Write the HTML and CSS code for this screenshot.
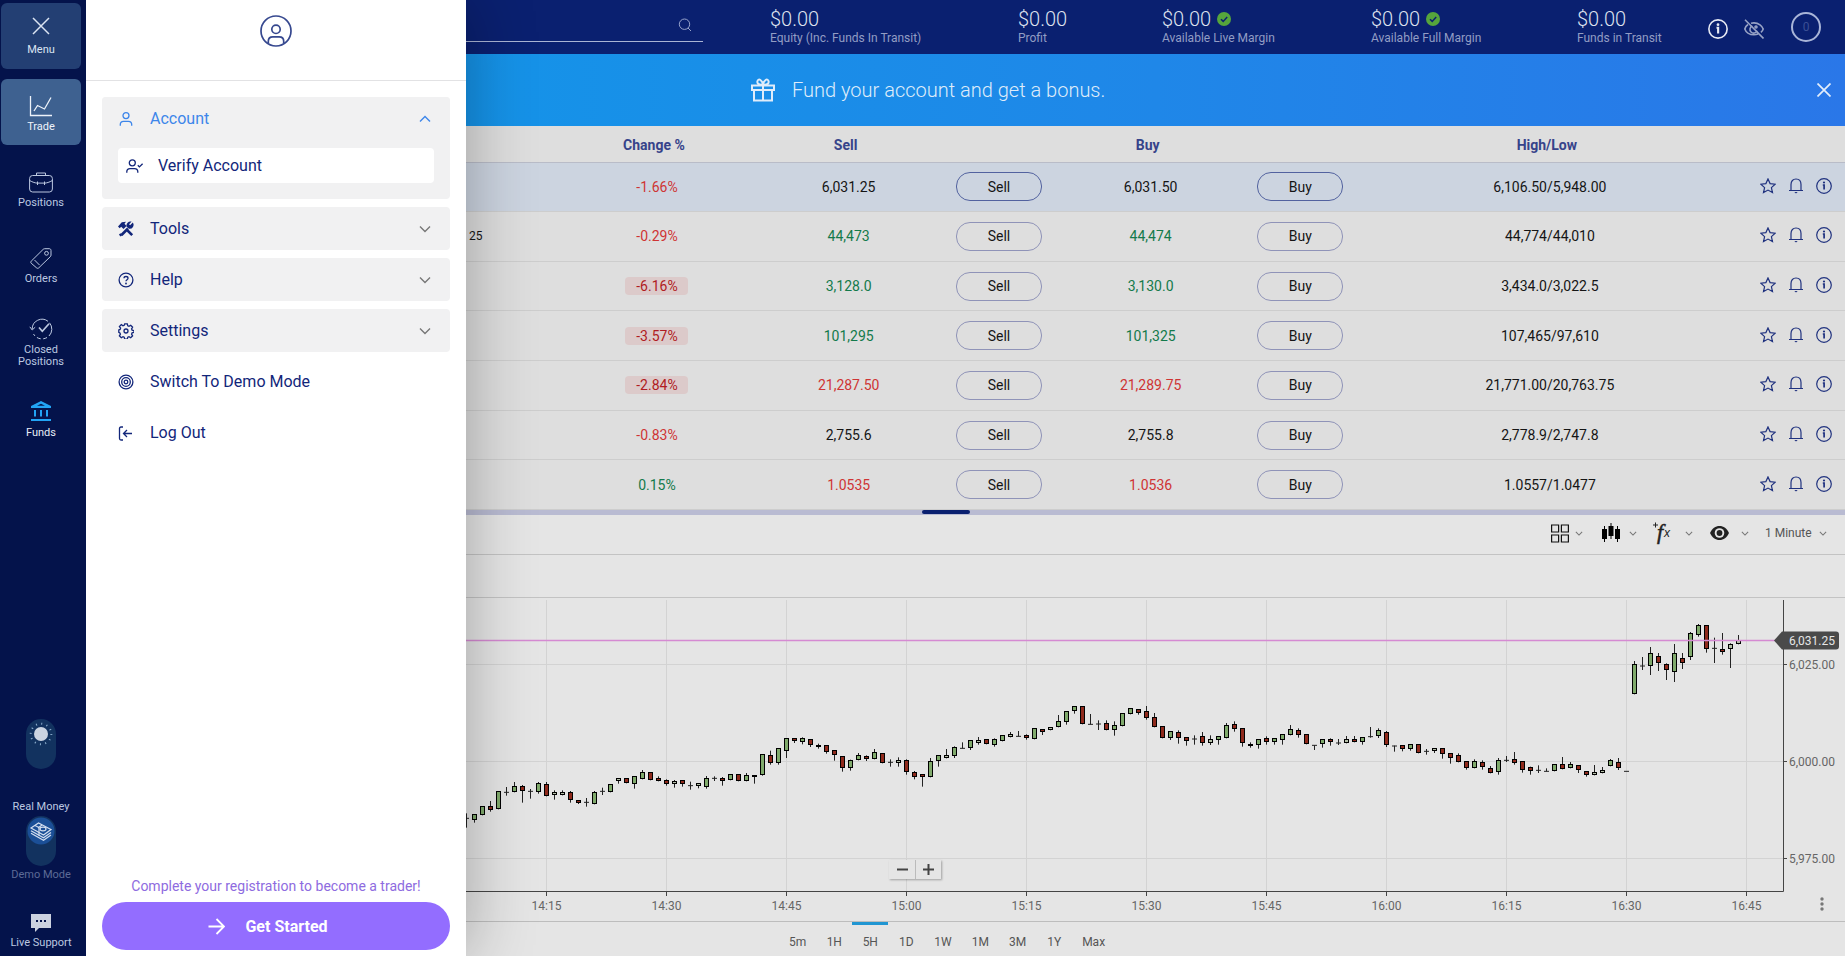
FILE: index.html
```html
<!DOCTYPE html>
<html lang="en">
<head>
<meta charset="utf-8">
<title>Trade</title>
<link rel="stylesheet" href="styles.css">
</head>
<body>
<svg class="symbols" aria-hidden="true">
  <symbol id="star" viewBox="0 0 16 16"><path d="M8 .9l2.100 4.700 5.100.6-3.800 3.400 1.100 5L8 12.100l-4.500 2.500 1.100-5L.8 6.200l5.100-.6z"/></symbol>
  <symbol id="bell" viewBox="0 0 16 16"><path d="M1 12.500h14M3 12.300V6.500c0-3.300 2-5.500 5-5.500s5 2.200 5 5.500v5.800"/><path d="M6.300 14h3.400L8 15.600z" fill="currentColor" stroke="none"/></symbol>
  <symbol id="info" viewBox="0 0 16 16"><circle cx="8" cy="8" r="7.300"/><path d="M6.800 7h1.300v4.600" stroke-width="1.700"/><circle cx="8" cy="4.500" r="1.100" fill="currentColor" stroke="none"/></symbol>
  <symbol id="down" viewBox="0 0 12 8"><path d="M1 1.500l5 5 5-5"/></symbol>
  <symbol id="up" viewBox="0 0 12 8"><path d="M1 6.500l5-5 5 5"/></symbol>
  <symbol id="tick" viewBox="0 0 14 14"><circle cx="7" cy="7" r="7" fill="#56a53c" stroke="none"/><path d="M4 7.200l2.200 2.200 4-4.400" stroke="#0a2070" stroke-width="1.500"/></symbol>
</svg>

<div class="app">
  <nav class="rail">
    <button class="rail-item menu" type="button">
      <svg class="icon" width="18" height="18" viewBox="0 0 18 18"><path d="M1 1l16 16M17 1L1 17" stroke-width="1.500"/></svg>
      <span>Menu</span>
    </button>
    <a class="rail-item trade" href="#trade">
      <svg class="icon" width="24" height="21" viewBox="0 0 24 21"><path d="M1.500 0v19.500H23M5 15l3.500-5.500 7 3.500L22 1.500" stroke-width="1.300"/></svg>
      <span>Trade</span>
    </a>
    <a class="rail-item" href="#positions">
      <svg class="icon" width="24" height="21" viewBox="0 0 24 21"><rect x=".6" y="3.500" width="22.800" height="16.500" rx="3"/><path d="M7.500 3.500V1h9v2.500M.6 8.500c3 1.800 6 2.500 7.400 2.600h8c1.400-.1 4.400-.8 7.400-2.600M8.500 9.500V13M15.500 9.500V13"/></svg>
      <span>Positions</span>
    </a>
    <a class="rail-item" href="#orders">
      <svg class="icon" width="22" height="21" viewBox="0 0 22 21"><path d="M1.200 13.200L13 1.500c.5-.5 1-.8 1.700-.8h4.600c1 0 1.700.7 1.700 1.700v4.700c0 .7-.3 1.200-.8 1.700L8.800 19.800c-.7.700-1.600.7-2.300 0L1.200 15.200c-.6-.6-.6-1.400 0-2zM4.500 12l5 5"/><circle cx="16.500" cy="5.300" r="1.900"/></svg>
      <span>Orders</span>
    </a>
    <a class="rail-item" href="#closed">
      <svg class="icon" width="24" height="22" viewBox="0 0 24 22"><path d="M3.200 11A9.800 9.800 0 0 1 19 3.300M20.500 4.800A9.800 9.800 0 0 1 20 18" /><path d="M18 19.500A9.800 9.800 0 0 1 4.500 16" stroke-dasharray="4 2.500"/><path d="M.8 8.800L3.200 12l3-2.800"/><path d="M10 9.500l3.300 3.800 6.700-7.500" stroke-width="1.700"/></svg>
      <span>Closed<br>Positions</span>
    </a>
    <a class="rail-item funds" href="#funds">
      <svg class="icon" width="20" height="20" viewBox="0 0 20 20"><path d="M10 0l10 5v2H0V5zM3 9h2v6.500H3zM9 9h2v6.500H9zM15 9h2v6.500h-2zM0 18h20v2H0z" fill="currentColor" stroke="none"/><path d="M10 2.700l4 2H6z" fill="#04134b" stroke="none"/></svg>
      <span>Funds</span>
    </a>
    <div class="rail-foot">
      <label class="switch">
        <input type="checkbox" aria-label="Light theme" checked>
        <svg class="knob" width="28" height="28" viewBox="0 0 28 28"><circle cx="14" cy="14" r="7" fill="#ccd5e2"/><circle cx="14" cy="14" r="10.300" fill="none" stroke="#8fb0cf" stroke-width="2" stroke-dasharray="1 4.390"/></svg>
      </label>
      <label class="money">
        <span>Real Money</span>
        <span class="switch">
          <input type="checkbox" aria-label="Real money or demo mode" checked>
          <svg class="knob" width="28" height="28" viewBox="0 0 28 28"><circle cx="14" cy="14" r="13.500" fill="#1b4f97"/><g fill="none" stroke="#d3def0" stroke-width="1.200"><path d="M4 11l7.500-5L24 12.500 16.500 18zM4 13.700l12.500 7L24 15.400M4 16.300l12.500 7L24 18"/><path d="M8 8.500l4 2v8.200M15 8l-4 3"/><ellipse cx="16" cy="12" rx="3" ry="1.800"/></g></svg>
        </span>
        <span class="dim">Demo Mode</span>
      </label>
      <button class="support" type="button">
        <svg width="20" height="18" viewBox="0 0 20 18"><path d="M0 0h20v14H8l-4 4v-4H0z" fill="#ccd2e0"/><path d="M5 6h2v2H5zM9 6h2v2H9zM13 6h2v2h-2z" fill="#04134b"/></svg>
        <span>Live Support</span>
      </button>
    </div>
  </nav>

  <aside class="drawer">
    <header class="drawer-head">
      <svg class="icon" width="32" height="32" viewBox="0 0 32 32" stroke-width="1.700"><circle cx="16" cy="16" r="15"/><circle cx="16" cy="14.300" r="4.200"/><path d="M8.300 28v-1.800c0-2.800 2-4.400 4.500-4.400h6.400c2.500 0 4.500 1.600 4.500 4.400V28"/></svg>
    </header>
    <div class="menu-list">
      <section class="group">
        <button class="menu-item open" type="button">
          <svg class="icon" width="16" height="16" viewBox="0 0 16 16" stroke-width="1.300"><circle cx="8" cy="4.600" r="3"/><path d="M2.300 14.800v-1.300c0-2 1.300-3.200 3.200-3.200h5c1.900 0 3.200 1.200 3.200 3.200v1.300"/></svg>
          <span>Account</span>
          <svg class="icon chev" width="12" height="8"><use href="#up"/></svg>
        </button>
        <a class="sub-item" href="#verify">
          <svg class="icon" width="18" height="16" viewBox="0 0 18 16" stroke-width="1.300"><circle cx="6.300" cy="4.800" r="3"/><path d="M.8 14.800v-1c0-2 1.300-3.200 3.200-3.200h4.600c1.900 0 3.200 1.200 3.200 3.200v1M11.800 7.300l1.600 1.600 3.200-3.200"/></svg>
          <span>Verify Account</span>
        </a>
      </section>
      <button class="menu-item" type="button">
        <svg class="icon" width="16" height="16" viewBox="0 0 16 16"><path d="M3.500 14L10 7.500M14.200 14.200L8.500 8.500" stroke-width="2.600"/><path d="M0 5.500L3.800 1.200 8 .8 6.500 2.800l2 2.200-3 3-2.300-2.300-1.500 1.600zM14.800 1.500l-2.700 2.700-1-1L13.600.6A4 4 0 0 0 8.700 5.700L11 7.800A4 4 0 0 0 14.800 1.500zM2.300 12.300l2 2-1.600 1.200-1.800-1.700z" fill="currentColor" stroke="none"/></svg>
        <span>Tools</span>
        <svg class="icon chev" width="12" height="8"><use href="#down"/></svg>
      </button>
      <button class="menu-item" type="button">
        <svg class="icon" width="16" height="16" viewBox="0 0 16 16" stroke-width="1.300"><circle cx="8" cy="8" r="6.900"/><path d="M6 6.300C6 5.200 6.900 4.500 8 4.500s2 .7 2 1.700c0 1.500-2 1.500-2 3.100"/><circle cx="8" cy="11.500" r=".9" fill="currentColor" stroke="none"/></svg>
        <span>Help</span>
        <svg class="icon chev" width="12" height="8"><use href="#down"/></svg>
      </button>
      <button class="menu-item" type="button">
        <svg class="icon" width="16" height="16" viewBox="0 0 16 16" stroke-width="1.300"><path d="M6.700.9h2.600l.5 1.900 1.200.5 1.700-1 1.900 1.900-1 1.700.5 1.200 1.900.5v1.800l-1.900.5-.5 1.200 1 1.700-1.900 1.900-1.700-1-1.200.5-.5 1.900H6.700l-.5-1.900-1.200-.5-1.700 1-1.900-1.900 1-1.700-.5-1.200L.8 9.300V6.900l1.300-.5.5-1.200-1.200-1.700 1.900-1.900 1.700 1.200 1.200-.5z"/><circle cx="8" cy="8" r="2"/></svg>
        <span>Settings</span>
        <svg class="icon chev" width="12" height="8"><use href="#down"/></svg>
      </button>
      <button class="menu-item plain" type="button">
        <svg class="icon" width="16" height="16" viewBox="0 0 16 16" stroke-width="1.300"><circle cx="8" cy="8" r="6.900"/><circle cx="8" cy="8" r="4.300"/><circle cx="8" cy="8" r="1.800"/></svg>
        <span>Switch To Demo Mode</span>
      </button>
      <button class="menu-item plain" type="button">
        <svg class="icon" width="16" height="16" viewBox="0 0 16 16" stroke-width="1.300"><path d="M5 2H3c-1 0-1.500.5-1.500 1.500v10c0 1 .5 1.500 1.500 1.500h2M14 8.500H5.500M9 5L5.500 8.500 9 12"/></svg>
        <span>Log Out</span>
      </button>
    </div>
    <footer class="drawer-foot">
      <p>Complete your registration to become a trader!</p>
      <button class="cta" type="button">
        <svg class="icon" width="17" height="17" viewBox="0 0 17 17" stroke-width="1.800"><path d="M.5 8.500h15M8.500 1l7.500 7.500L8.500 16"/></svg>
        <span>Get Started</span>
      </button>
    </footer>
  </aside>

  <main class="main">
    <header class="topbar">
      <label class="search">
        <input type="search" aria-label="Search">
        <svg class="icon" width="14" height="14" viewBox="0 0 14 14"><circle cx="6.500" cy="6.200" r="5.200"/><path d="M10 10l3 3"/></svg>
      </label>
      <div class="metric"><b>$0.00</b><span>Equity (Inc. Funds In Transit)</span></div>
      <div class="metric"><b>$0.00</b><span>Profit</span></div>
      <div class="metric"><b>$0.00 <svg class="icon" width="14" height="14"><use href="#tick"/></svg></b><span>Available Live Margin</span></div>
      <div class="metric"><b>$0.00 <svg class="icon" width="14" height="14"><use href="#tick"/></svg></b><span>Available Full Margin</span></div>
      <div class="metric"><b>$0.00</b><span>Funds in Transit</span></div>
      <div class="top-actions">
        <button type="button" aria-label="Information"><svg class="icon" width="20" height="20" stroke-width="1.300"><use href="#info"/></svg></button>
        <button type="button" aria-label="Hide balances" class="muted"><svg class="icon" width="20" height="20" viewBox="0 0 20 20" stroke-width="1.600"><path d="M4 5.500C2.300 6.700 1.200 8.300.8 10c1 3 4.500 5.800 9.200 5.800 1.500 0 2.800-.2 4-.7M7 4.300c.9-.3 2-.4 3-.4 4.700 0 8.200 3 9.200 6.100-.4 1.300-1.200 2.500-2.300 3.400M1 .8l18.500 18.700"/><path d="M8.300 7a3.700 3.700 0 1 0 4.800 4.800"/><circle cx="12" cy="8" r="1"/></svg></button>
        <span class="counter">0</span>
      </div>
    </header>

    <section class="banner">
      <svg class="icon" width="24" height="24" viewBox="0 0 24 24" stroke-width="2"><path d="M1 7.500h22v4.500H1zM3 12h18v10.500H3zM12 7.500v15M12 7C9 7 5.500 6 6.500 3s5-1 5.500 4c.5-5 4.500-7 5.500-4S15 7 12 7z"/></svg>
      <span>Fund your account and get a bonus.</span>
      <button type="button" aria-label="Close"><svg class="icon" width="14" height="14" viewBox="0 0 14 14" stroke-width="1.700"><path d="M.5.5l13 13M13.500.5l-13 13"/></svg></button>
    </section>

    <table class="quotes">
      <colgroup><col class="c-name"><col class="c-change"><col class="c-price"><col class="c-sell"><col class="c-buyprice"><col class="c-buy"><col class="c-range"><col class="c-act"></colgroup>
      <thead><tr><th></th><th>Change %</th><th>Sell</th><th></th><th>Buy</th><th></th><th>High/Low</th><th></th></tr></thead>
      <tbody>
        <tr class="selected"><td></td><td class="neg">-1.66%</td><td>6,031.25</td><td><button type="button">Sell</button></td><td>6,031.50</td><td><button type="button">Buy</button></td><td>6,106.50/5,948.00</td><td class="acts"></td></tr>
        <tr><td class="name">25</td><td class="neg">-0.29%</td><td class="pos">44,473</td><td><button type="button">Sell</button></td><td class="pos">44,474</td><td><button type="button">Buy</button></td><td>44,774/44,010</td><td class="acts"></td></tr>
        <tr><td></td><td><mark>-6.16%</mark></td><td class="pos">3,128.0</td><td><button type="button">Sell</button></td><td class="pos">3,130.0</td><td><button type="button">Buy</button></td><td>3,434.0/3,022.5</td><td class="acts"></td></tr>
        <tr><td></td><td><mark>-3.57%</mark></td><td class="pos">101,295</td><td><button type="button">Sell</button></td><td class="pos">101,325</td><td><button type="button">Buy</button></td><td>107,465/97,610</td><td class="acts"></td></tr>
        <tr><td></td><td><mark>-2.84%</mark></td><td class="neg">21,287.50</td><td><button type="button">Sell</button></td><td class="neg">21,289.75</td><td><button type="button">Buy</button></td><td>21,771.00/20,763.75</td><td class="acts"></td></tr>
        <tr><td></td><td class="neg">-0.83%</td><td>2,755.6</td><td><button type="button">Sell</button></td><td>2,755.8</td><td><button type="button">Buy</button></td><td>2,778.9/2,747.8</td><td class="acts"></td></tr>
        <tr><td></td><td class="pos">0.15%</td><td class="neg">1.0535</td><td><button type="button">Sell</button></td><td class="neg">1.0536</td><td><button type="button">Buy</button></td><td>1.0557/1.0477</td><td class="acts"></td></tr>
      </tbody>
    </table>

    <div class="splitter"><span></span></div>

    <div class="toolbar">
      <button type="button" aria-label="Layout">
        <svg width="18" height="19" viewBox="0 0 18 19" fill="none" stroke="#111" stroke-width="1.200"><path d="M.6 1h7v7h-7zM10.400 1h7v7h-7zM.6 11h7v7h-7zM10.400 11h7v7h-7z"/></svg>
        <svg class="icon small" width="8" height="5"><use href="#down"/></svg>
      </button>
      <button type="button" aria-label="Chart type">
        <svg width="24" height="20" viewBox="0 0 24 20" fill="#000"><path d="M3 6h5v10H3zM9.500 3h5v10h-5zM16 6h5v10h-5zM5 3h1v16H5zM11.500 0h1v16h-1zM18 3h1v16h-1z"/></svg>
        <svg class="icon small" width="8" height="5"><use href="#down"/></svg>
      </button>
      <button type="button" aria-label="Indicators">
        <svg width="26" height="28" viewBox="0 0 26 28"><path d="M0 6h5M2.500 3.500v5" stroke="#222" fill="none"/><text class="fx" x="4" y="20">f</text><text class="fx-x" x="11" y="18">x</text></svg>
        <svg class="icon small" width="8" height="5"><use href="#down"/></svg>
      </button>
      <button type="button" aria-label="Visibility">
        <svg width="26" height="14" viewBox="0 0 26 14"><path d="M1 7C3 2.500 6.500 0 10.500 0S18 2.500 20 7c-2 4.500-5.500 7-9.500 7S3 11.500 1 7z" fill="#222"/><circle cx="10.500" cy="7" r="4.800" fill="#e5e5e5"/><circle cx="10.500" cy="7" r="2.900" fill="#222"/></svg>
        <svg class="icon small" width="8" height="5"><use href="#down"/></svg>
      </button>
      <label class="interval">
        <select aria-label="Interval"><option>1 Minute</option></select>
        <svg class="icon small" width="8" height="5"><use href="#down"/></svg>
      </label>
    </div>
    <div class="strip"></div>

    <section class="chart">
      <svg id="plot" class="plot" role="img" aria-label="Price chart"></svg>
      <div class="zoom"><button type="button" aria-label="Zoom out"><svg width="11" height="11"><path d="M0 5.500h11" stroke="#444" stroke-width="2"/></svg></button><button type="button" aria-label="Zoom in"><svg width="11" height="11"><path d="M0 5.500h11M5.500 0v11" stroke="#444" stroke-width="2"/></svg></button></div>
    </section>

    <div class="ranges">
      <button type="button">5m</button><button type="button">1H</button><button type="button" class="on">5H</button><button type="button">1D</button><button type="button">1W</button><button type="button">1M</button><button type="button">3M</button><button type="button">1Y</button><button type="button">Max</button>
    </div>
  </main>
</div>
<script src="chart.js"></script>
</body>
</html>
```

FILE: styles.css
```css
* { box-sizing: border-box; }
body { margin: 0; font-family: Roboto, "Liberation Sans", sans-serif; font-size: 14px; color: #151515; }
button, input, select { font: inherit; color: inherit; background: none; border: 0; padding: 0; margin: 0; }
a { color: inherit; text-decoration: none; }
svg { display: block; flex: none; }
.symbols { position: absolute; width: 0; height: 0; }
.icon { fill: none; stroke: currentColor; }
.app { display: grid; grid-template-columns: 86px 380px minmax(0, 1fr); min-height: 100vh; }

/* left rail */
.rail { display: flex; flex-direction: column; gap: 10px; padding: 3px 5px 6px 1px; background: #04134b; color: #bcc8e0; font-size: 11px; line-height: 12px; text-align: center; }
.rail-item { display: flex; flex-direction: column; align-items: center; justify-content: center; gap: 4px; height: 66px; padding-top: 5px; border-radius: 6px; }
.rail .menu { background: #233f73; color: #dbe4f2; gap: 9px; padding-top: 0; }
.rail .trade { background: #3e6190; color: #eef3fa; }
.rail .funds { color: #22a4f5; gap: 6px; padding-top: 7px; }
.rail .funds span { color: #e8edf6; }
.rail-foot { display: flex; flex-direction: column; align-items: center; margin-top: auto; }
.switch { position: relative; display: block; width: 30px; height: 50px; }
.switch input { display: block; appearance: none; width: 30px; height: 50px; border-radius: 15px; background: #12325f; }
.knob { position: absolute; left: 1px; top: 1px; }
.money { display: flex; flex-direction: column; align-items: center; gap: 3px; margin-top: 32px; }
.dim { color: #5d6b96; }
.support { display: flex; flex-direction: column; align-items: center; gap: 4px; margin-top: 33px; line-height: 14px; }

/* drawer */
.drawer { position: relative; z-index: 1; display: flex; flex-direction: column; background: #fff; color: #12267a; box-shadow: 0 0 64px rgba(0, 0, 0, .3); clip-path: inset(0 -80px 0 0); }
.drawer-head { display: flex; justify-content: center; height: 81px; padding-top: 15px; border-bottom: 1px solid #e2e2e4; color: #36488f; }
.menu-list { display: flex; flex-direction: column; gap: 8px; padding: 16px; font-size: 16px; }
.group { background: #f1f1f2; border-radius: 4px; padding-bottom: 16px; }
.menu-item { display: flex; align-items: center; gap: 16px; width: 100%; height: 43px; padding: 0 19px 0 16px; background: #f1f1f2; border-radius: 4px; text-align: left; }
.menu-item.plain { background: none; }
.menu-item.open { color: #3d86ea; }
.chev { margin-left: auto; color: #777; stroke-width: 1.4; }
.open .chev { color: inherit; }
.sub-item { display: flex; align-items: center; gap: 14px; height: 35px; margin: 8px 16px 0; padding-left: 8px; background: #fff; border-radius: 4px; }
.drawer-foot { margin-top: auto; padding: 0 16px 6px; text-align: center; color: #8e6be0; }
.drawer-foot p { margin: 0 0 7px; line-height: 18px; }
.cta { display: flex; align-items: center; justify-content: center; gap: 20px; width: 100%; height: 48px; padding-right: 16px; border-radius: 24px; background: #936dff; color: #fff; font-size: 16px; font-weight: 700; }

/* account bar */
.main { display: flex; flex-direction: column; background: #e5e5e5; min-width: 0; }
.topbar { display: grid; grid-template-columns: 304fr 248fr 144fr 209fr 206fr 128fr 140fr; height: 54px; background: #0a2070; color: #d8ddec; }
.search { display: flex; align-items: center; height: 42px; margin-right: 67px; padding-right: 11px; padding-top: 8px; border-bottom: 1px solid #aab4d4; color: #98a4cc; }
.search input { flex: 1; min-width: 0; outline: 0; }
.metric { padding-top: 7px; white-space: nowrap; font-size: 12px; line-height: 14px; color: #929dc4; }
.metric b { display: flex; align-items: center; gap: 6px; font-size: 20px; font-weight: 300; line-height: 24px; color: #dfe3ef; }
.metric span { display: block; }
.top-actions { display: flex; align-items: center; gap: 16px; padding-right: 24px; justify-content: flex-end; color: #e6e9f3; }
.top-actions button { padding-top: 3px; }
.muted { color: #98a3c6; }
.counter { width: 30px; height: 30px; margin-left: 11px; border: 2px solid #a9b5d8; border-radius: 50%; font-size: 12px; line-height: 26px; text-align: center; color: #3c4f95; }

.banner { display: flex; align-items: center; gap: 17px; height: 72px; padding: 0 14px 0 285px; background: linear-gradient(90deg, #1593e8, #1f87e8 50%, #2a77e8); color: #dfecfa; font-size: 20px; font-weight: 300; }
.banner button { margin-left: auto; color: #e4eefb; }

/* quotes */
.quotes { width: 100%; height: 384px; table-layout: fixed; border-collapse: collapse; background: #dedede; text-align: center; }
.c-name { width: 6.600%; } .c-change { width: 14.500%; } .c-price { width: 13.300%; } .c-sell { width: 8.500%; }
.c-buyprice { width: 13.500%; } .c-buy { width: 8.200%; } .c-act { width: 7.400%; }
.quotes th { height: 36px; padding: 3px 6px 0 0; color: #36438a; font-weight: 700; border-bottom: 1px solid #b9bcc8; }
.quotes td { padding: 0; border-bottom: 1px solid #cdcdcd; }
.quotes .selected td { background: #ccd4e0; }
.quotes .name { padding-left: 3px; font-size: 12px; text-align: left; }
.quotes td button { width: 86px; height: 29px; border: 1px solid #8f93b8; border-radius: 14px; }
.quotes .selected td > button { border-color: #52629f; }
.neg { color: #cf3434; }
.pos { color: #137a4b; }
.quotes mark { display: inline-block; width: 63px; line-height: 18px; border-radius: 4px; background: #dccaca; color: #b01c22; }
.row-icons { display: flex; justify-content: center; gap: 12px; color: #20327f; padding: 0 0 2px 4px; }
.quotes td .row-icons button { width: 16px; height: 16px; border: 0; border-radius: 0; }

.splitter { height: 5px; background: #b9bbd2; padding-left: 456px; }
.splitter span { display: block; width: 48px; height: 4px; border-radius: 2px; background: #0a2070; }

/* chart */
.toolbar { display: flex; align-items: center; justify-content: flex-end; gap: 16px; height: 40px; padding: 0 18px 3px 0; border-bottom: 1px solid #c3c3c3; }
.toolbar button { display: flex; align-items: center; gap: 6px; }
.small { color: #777; stroke-width: 1.7; }
.interval { display: flex; align-items: center; justify-content: space-between; width: 62px; font-size: 12px; color: #555; }
.interval select { appearance: none; }
.fx { font: italic 22px "Liberation Serif", serif; fill: #222; stroke: #222; stroke-width: .5px; }
.fx-x { font: italic 12px "Liberation Sans", sans-serif; fill: #222; }
.strip { height: 43px; border-bottom: 1px solid #c3c3c3; }
.chart { position: relative; flex: 1; display: flex; min-height: 323px; border-bottom: 1px solid #bdbdbd; }
.plot { flex: 1; min-width: 0; height: 323px; font-size: 12px; }
.zoom { position: absolute; left: 423px; bottom: 42px; display: flex; height: 19px; background: #e5e5e5; box-shadow: 1px 1px 2px rgba(0, 0, 0, .3); }
.zoom button { display: flex; align-items: center; justify-content: center; width: 26px; }
.zoom button + button { border-left: 1px solid #bbb; }
.ranges { display: flex; height: 34px; padding-left: 313px; font-size: 12px; color: #555; }
.ranges button { min-width: 36px; padding: 6px 10px 0; }
.ranges .on { padding-top: 3px; border-top: 3px solid #2196d2; }
```

FILE: chart.js
```js
// One row per minute: high, body top, body bottom, low, kind (thirds of a pixel).
const candles = `400,415,415,443,d 402,406,422,428,g 382,382,406,406,g 363,382,391,395,r 333,337,388,388,g 321,337,337,347,d 306,322,337,337,g 315,322,334,368,r 327,334,334,356,d 306,313,337,341,g
306,316,349,349,r 331,340,346,359,w 331,340,346,346,w 333,340,361,368,r 360,364,370,372,r 354,367,367,380,d 333,340,373,373,g 323,334,334,345,d 316,316,337,337,g 294,298,304,311,w
298,298,310,310,r 292,292,313,326,g 270,280,298,298,g 276,280,301,301,r 289,298,304,304,r 298,304,313,317,r 300,307,313,323,w 301,304,313,320,r 305,317,317,329,d 309,313,319,325,w
288,298,322,326,g 289,295,295,303,d 291,298,304,317,r 285,286,301,301,g 283,286,304,304,r 279,289,304,304,g 286,287,289,311,r 225,226,287,287,g 212,229,250,254,r 208,208,250,254,g
174,178,214,234,g 174,178,184,189,r 172,178,187,193,g 178,181,196,201,r 191,197,199,206,r 199,199,217,221,r 213,214,226,242,r 232,232,265,275,r 239,244,265,272,g 219,229,241,241,g
226,232,238,243,r 207,220,238,238,g 219,223,250,250,r 238,247,247,260,d 232,244,250,260,w 238,244,277,284,r 273,280,292,298,r 283,286,292,320,r 234,247,292,292,g 226,229,244,260,g
207,229,235,235,w 199,205,229,234,g 187,205,205,205,d 180,184,205,210,g 171,184,190,194,w 178,181,193,193,r 175,181,196,200,g 166,169,184,184,g 156,166,172,172,w 153,169,169,169,d
163,169,175,179,r 147,148,178,178,g 148,149,154,165,r 141,145,151,151,w 105,127,142,142,g 93,97,127,134,g 78,82,94,101,g 79,82,133,133,r 102,133,133,133,d 121,132,132,150,d
121,133,151,151,r 124,139,151,167,g 99,103,139,139,g 85,88,103,103,g 87,91,100,104,r 78,97,115,119,r 99,115,142,142,r 142,142,175,175,r 153,157,175,180,g 151,160,175,191,r
171,175,184,197,r 166,177,177,194,d 156,172,190,197,r 166,181,190,195,w 168,172,181,194,g 129,139,175,175,g 124,136,148,155,r 145,148,190,200,r 187,194,196,203,r 177,181,196,206,g
169,178,187,194,r 174,178,187,194,g 162,166,181,194,g 135,151,166,166,g 145,154,166,173,r 163,166,193,193,r 196,196,196,210,d 177,181,193,203,g 175,181,187,197,r 177,189,189,195,d
168,181,190,190,w 168,181,187,187,r 172,175,187,194,g 141,170,170,173,d 145,154,169,174,g 153,160,196,201,r 197,198,198,215,d 196,199,208,214,r 193,196,208,212,g 193,196,220,220,r
207,214,214,224,d 204,208,214,219,w 205,208,223,236,r 220,223,235,251,r 220,229,247,247,r 244,247,265,269,r 238,247,265,265,g 241,250,262,269,r 258,268,280,280,r 234,244,277,284,g
228,241,241,246,d 216,241,250,254,r 244,247,271,278,r 260,265,274,284,r 256,271,271,279,d 265,274,274,274,d 252,256,274,274,g 231,256,268,268,r 246,256,265,265,g 256,259,271,279,r
274,277,286,290,r 255,280,286,286,w 261,274,280,280,w 237,244,259,259,g 234,250,265,270,r 274,274,274,274,d -57,-44,43,43,g -69,-42,-42,-30,d -99,-77,-41,-15,g -81,-68,-50,-27,r
-50,-44,-29,0,r -108,-77,-23,6,g -81,-62,-50,-33,r -144,-137,-68,-60,g -168,-161,-134,-130,g -162,-161,-92,-82,r -127,-95,-95,-51,d -141,-89,-83,-76,r -110,-104,-92,-36,w -135,-117,-107,-107,w`
  .split(/\s+/).map(row => {
    const [high, top, bottom, low, kind] = row.split(",");
    return { high: +high, top: +top, bottom: +bottom, low: +low, kind };
  });

const STEP = 8;          // pixels per minute
const ORIGIN = 82;       // y of value 0
const AXIS_Y = 293;
const AXIS_RIGHT = 62;   // distance from the price axis to the right edge
const LAST_RIGHT = 107;  // distance from the last candle to the right edge
const fills = { g: "#80aa6c", r: "#8f2a1c", w: "#b5c0a8" };

function draw() {
  const svg = document.getElementById("plot");
  const width = svg.clientWidth;
  const axisX = width - AXIS_RIGHT;
  const xOf = i => Math.round(width - LAST_RIGHT - (candles.length - 1 - i) * STEP) + 0.5;
  const yOf = v => ORIGIN + v / 3;
  const line = (x1, y1, x2, y2, stroke, w = 1) =>
    `<path d="M${x1} ${y1}L${x2} ${y2}" stroke="${stroke}" stroke-width="${w}"/>`;
  let out = "";

  [["6,025.00", 66.5], ["6,000.00", 163.5], ["5,975.00", 260.5]].forEach(([label, y]) => {
    out += line(0, y, axisX, y, "#d3d3d3") + line(axisX, y, axisX + 4, y, "#444");
    out += `<text x="${axisX + 6}" y="${y + 4}" fill="#666">${label}</text>`;
  });
  ["14:15", "14:30", "14:45", "15:00", "15:15", "15:30", "15:45", "16:00", "16:15", "16:30", "16:45"].forEach((label, n) => {
    const x = xOf(10 + n * 15);
    out += line(x, 2, x, AXIS_Y, "#d3d3d3") + line(x, AXIS_Y, x, AXIS_Y + 5, "#444");
    out += `<text x="${x}" y="${AXIS_Y + 19}" text-anchor="middle" fill="#666">${label}</text>`;
  });

  candles.forEach((c, i) => {
    const x = xOf(i);
    out += line(x, yOf(c.high), x, yOf(c.low), "#222");
    if (c.kind === "d") {
      out += line(x - 2.5, yOf(c.top), x + 2.5, yOf(c.top), "#222");
    } else {
      const top = Math.round(yOf(c.top)) - 0.5;
      const height = Math.max(1, Math.round((c.bottom - c.top) / 3));
      out += `<rect x="${x - 2}" y="${top}" width="4" height="${height}" fill="${fills[c.kind]}" stroke="#000"/>`;
    }
  });

  const py = 42.5;
  out += line(0, py, axisX, py, "#d58ad2", 1.5);
  out += `<path d="M0 ${AXIS_Y + 0.5}H${axisX + 0.5}V2" fill="none" stroke="#444"/>`;
  out += `<path d="M${axisX - 9} ${py}l8-9h54q3 0 3 3v12q0 3-3 3h-54z" fill="#4a4a4a"/>`;
  out += `<text x="${axisX + 6}" y="${py + 4}" fill="#e6e6e6">6,031.25</text>`;
  [301, 306, 311].forEach(y => { out += `<circle cx="${width - 23}" cy="${y}" r="1.7" fill="#777"/>`; });
  svg.innerHTML = out;
}

const labels = { star: "Favourite", bell: "Alert", info: "Details" };
document.querySelectorAll(".acts").forEach(cell => {
  cell.innerHTML = `<div class="row-icons">${Object.keys(labels).map(id =>
    `<button type="button" aria-label="${labels[id]}"><svg class="icon" width="16" height="16" stroke-width="1.2"><use href="#${id}"/></svg></button>`).join("")}</div>`;
});

draw();
window.addEventListener("resize", draw);
```
